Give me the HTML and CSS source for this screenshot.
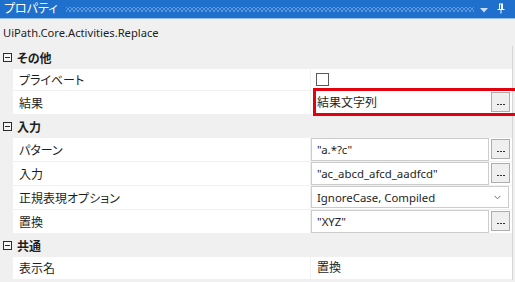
FILE: index.html
```html
<!DOCTYPE html>
<html lang="ja">
<head>
<meta charset="utf-8">
<title>プロパティ</title>
<link rel="stylesheet" href="styles.css">
</head>
<body>
<div class="panel">
  <div class="titlebar">
    <span class="title">プロパティ</span>
    <span class="dots"></span>
    <svg class="drop" width="8" height="5" viewBox="0 0 8 5"><path d="M0 0H8L4 4.5Z" fill="#c7dcf5"/></svg>
    <svg class="pin" width="8" height="11" viewBox="0 0 8 11"><path d="M2 0.5H6V6H7.5V7H4.5V10.5H3.5V7H0.5V6H2Z M3 1.5V6H4V1.5Z" fill="#ffffff" fill-rule="evenodd"/></svg>
  </div>
  <div class="typename">UiPath.Core.Activities.Replace</div>
  <div class="grid">
    <div class="cat h23"><span class="toggle"></span><span class="cat-name">その他</span></div>
    <div class="prop h22">
      <div class="label">プライベート</div>
      <div class="value"><span class="check"></span></div>
    </div>
    <div class="prop h24">
      <div class="label">結果</div>
      <div class="value">
        <div class="box plain">結果文字列</div><div class="btn"><i></i><i></i><i></i></div>
        <div class="highlight"></div>
      </div>
    </div>
    <div class="cat h23"><span class="toggle"></span><span class="cat-name">入力</span></div>
    <div class="prop h24">
      <div class="label">パターン</div>
      <div class="value"><div class="box latin">"a.*?c"</div><div class="btn"><i></i><i></i><i></i></div></div>
    </div>
    <div class="prop h24">
      <div class="label">入力</div>
      <div class="value"><div class="box latin">"ac_abcd_afcd_aadfcd"</div><div class="btn"><i></i><i></i><i></i></div></div>
    </div>
    <div class="prop h24">
      <div class="label">正規表現オプション</div>
      <div class="value"><div class="combo"><span class="combo-text latin">IgnoreCase, Compiled</span><svg class="chev" width="7" height="5" viewBox="0 0 7 5"><path d="M0.5 0.8L3.5 3.8L6.5 0.8" fill="none" stroke="#707070" stroke-width="1"/></svg></div></div>
    </div>
    <div class="prop h24">
      <div class="label">置換</div>
      <div class="value"><div class="box latin">"XYZ"</div><div class="btn"><i></i><i></i><i></i></div></div>
    </div>
    <div class="cat h23"><span class="toggle"></span><span class="cat-name">共通</span></div>
    <div class="prop h23">
      <div class="label">表示名</div>
      <div class="value"><span class="text">置換</span></div>
    </div>
  </div>
</div>
</body>
</html>
```

FILE: styles.css
```css
html, body {
  margin: 0;
  padding: 0;
}
body {
  width: 515px;
  height: 282px;
  overflow: hidden;
  background: #f0f0f0;
  font-family: "Noto Sans", "Noto Sans CJK JP", sans-serif;
  font-size: 12px;
  color: #1e1e1e;
  font-feature-settings: "palt";
}
.panel {
  width: 515px;
  height: 282px;
  overflow: hidden;
  position: relative;
}
.titlebar {
  height: 18px;
  background: #1f70cd;
  border-bottom: 1px solid #93bdec;
  display: flex;
  align-items: center;
  color: #fff;
}
.title {
  margin-left: 4px;
  margin-right: 8px;
  font-size: 12px;
  line-height: 18px;
  white-space: nowrap;
  flex: none;
}
.dots {
  flex: 1;
  height: 5px;
  margin-right: 6px;
  background-image:
    radial-gradient(circle, #5e98dc 0.7px, transparent 1px),
    radial-gradient(circle, #5e98dc 0.7px, transparent 1px);
  background-size: 4px 4px, 4px 4px;
  background-position: 0 0, 2px 2px;
  margin-top: 1px;
}
.drop {
  margin-right: 9px;
  margin-top: 2px;
}
.pin {
  margin-right: 10px;
  margin-top: -1px;
}
.typename {
  height: 27px;
  line-height: 27px;
  padding-left: 3px;
  font-size: 11.2px;
}
.latin {
  font-size: 11.4px;
}
.grid {
  width: 512px;
  border-right: 1px solid #d6d6d6;
}
.h22 { height: 22px; }
.h23 { height: 23px; }
.h24 { height: 24px; }
.cat {
  box-sizing: border-box;
  display: flex;
  align-items: center;
  background: #f0f0f0;
}
.toggle {
  box-sizing: border-box;
  width: 9px;
  height: 9px;
  border: 1px solid #2b2b2b;
  margin-left: 3px;
  margin-right: 5px;
  position: relative;
  background: #f7f7f7;
}
.toggle::after {
  content: "";
  position: absolute;
  left: 1px;
  top: 3px;
  width: 5px;
  height: 1px;
  background: #2b2b2b;
}
.cat-name {
  font-weight: bold;
}
.prop {
  box-sizing: border-box;
  display: flex;
  margin-left: 13px;
  border-bottom: 1px solid #f0f0f0;
}
.label {
  width: 298px;
  background: #fff;
  border-right: 1px solid #f0f0f0;
  padding-left: 6px;
  box-sizing: border-box;
  display: flex;
  align-items: center;
  flex: none;
}
.value {
  flex: 1;
  background: #fff;
  display: flex;
  align-items: flex-start;
  position: relative;
}
.check {
  box-sizing: border-box;
  width: 13px;
  height: 13px;
  border: 1px solid #5a5a5a;
  margin-left: 5px;
  margin-top: 4px;
  background: #fff;
}
.box {
  box-sizing: border-box;
  width: 178px;
  height: 23px;
  border: 1px solid #cccccc;
  background: #fff;
  padding-left: 5px;
  line-height: 21px;
  white-space: nowrap;
  overflow: hidden;
}
.box.plain {
  border-color: #fff;
}
.btn {
  box-sizing: border-box;
  width: 19px;
  height: 20px;
  margin-left: 2px;
  margin-top: 1px;
  border: 1px solid #adadad;
  background: #efefef;
  display: flex;
  justify-content: center;
  align-items: flex-end;
  gap: 1px;
  padding-bottom: 6px;
}
.btn i {
  display: block;
  width: 2px;
  height: 1px;
  background: #333;
}
.combo {
  box-sizing: border-box;
  width: 198px;
  height: 22px;
  border: 1px solid #cccccc;
  background: #fff;
  display: flex;
  align-items: center;
  padding-left: 5px;
  padding-right: 7px;
}
.combo-text {
  flex: 1;
}
.text {
  padding-left: 6px;
  line-height: 22px;
}
.highlight {
  position: absolute;
  left: 2px;
  top: -3px;
  width: 210px;
  height: 28px;
  box-sizing: border-box;
  border: 3px solid #e3000f;
  pointer-events: none;
}
```
